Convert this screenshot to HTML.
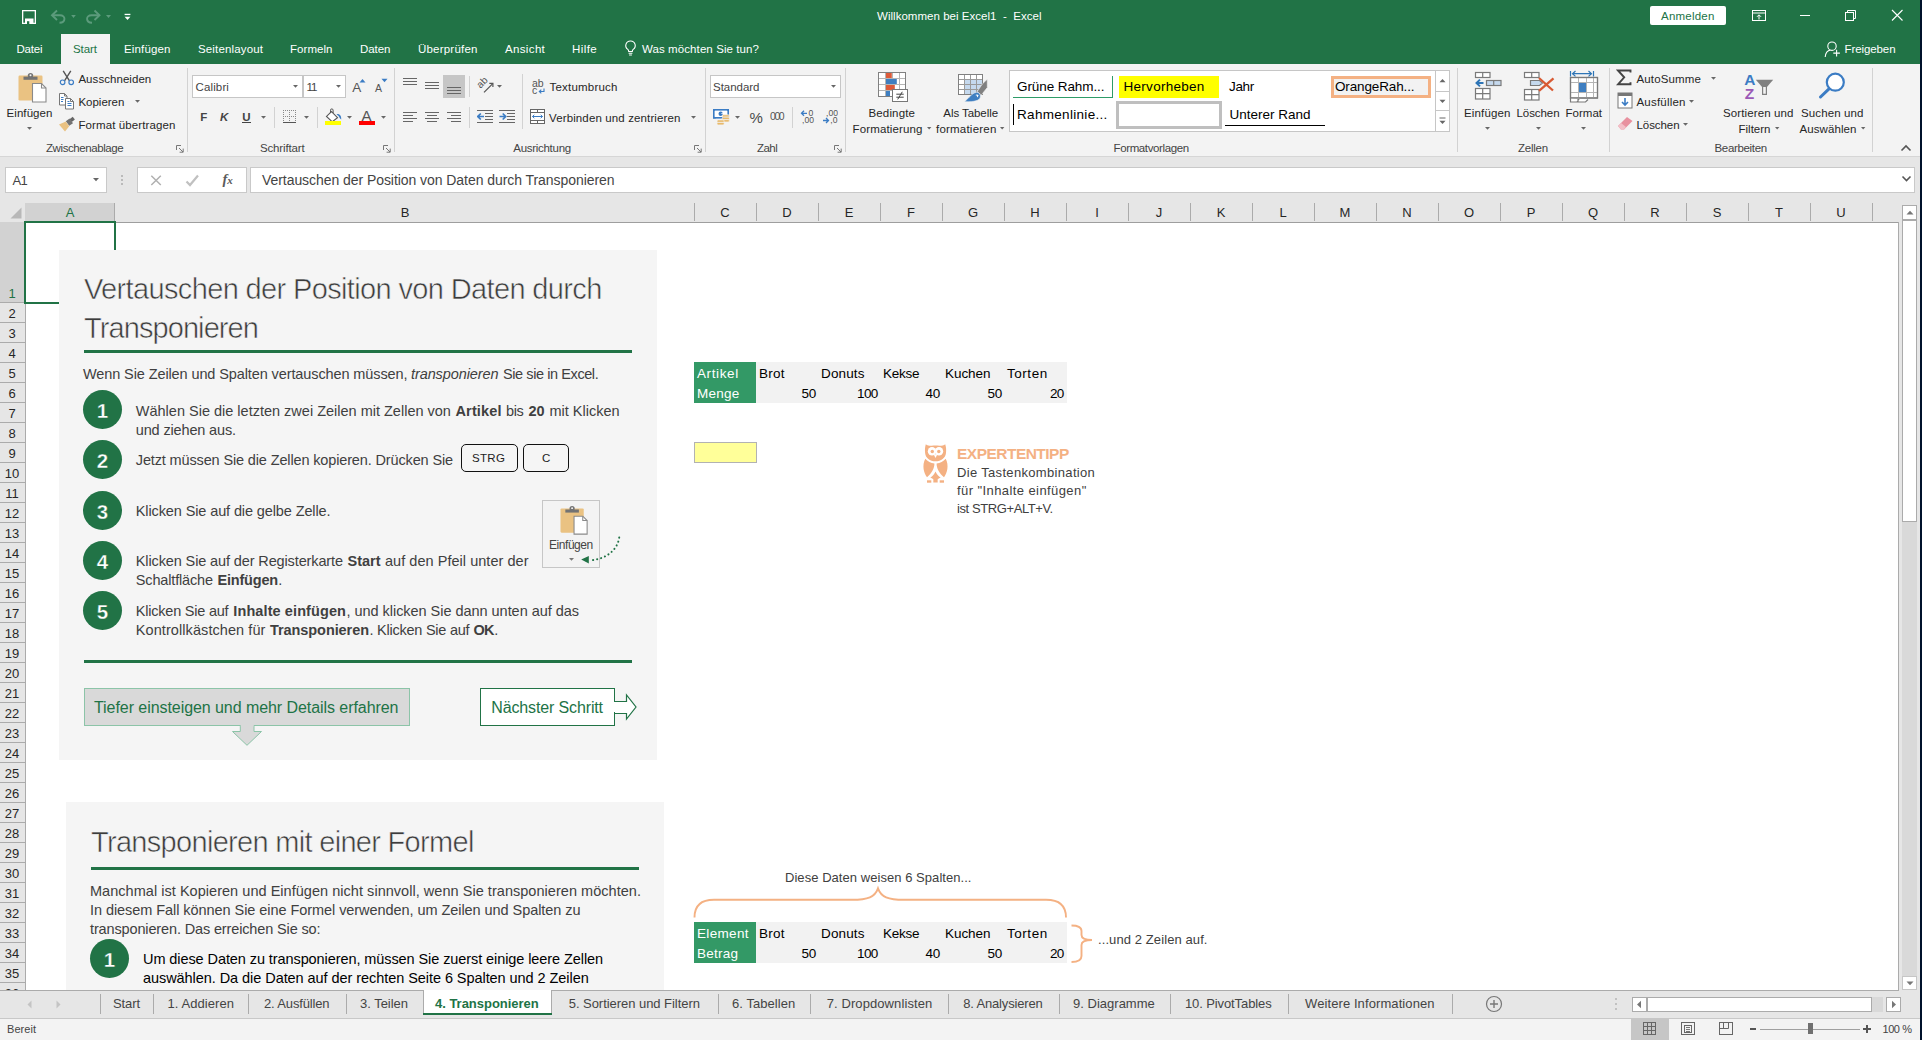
<!DOCTYPE html><html lang="de"><head><meta charset="utf-8"><title>Willkommen bei Excel1 - Excel</title><style>

html,body{margin:0;padding:0}
body{width:1922px;height:1040px;overflow:hidden;background:#fff;position:relative;
font-family:"Liberation Sans",sans-serif;}
body>div,body>svg,body>span{position:absolute;box-sizing:border-box}
.t{white-space:nowrap;line-height:1;display:block}
b{font-weight:bold}

</style></head><body>
<div style="left:0px;top:0px;width:1920px;height:64px;background:#217346;"></div>
<div style="left:1920px;top:0px;width:2px;height:1040px;background:#00112b;"></div>
<div style="left:0px;top:64px;width:1920px;height:93px;background:#f3f3f3;"></div>
<div style="left:0px;top:156px;width:1920px;height:1px;background:#d6d6d6;"></div>
<div style="left:0px;top:157px;width:1920px;height:46px;background:#e6e6e6;"></div>
<div style="left:0px;top:203px;width:1920px;height:19px;background:#e6e6e6;"></div>
<div style="left:0px;top:222px;width:25px;height:768px;background:#e6e6e6;"></div>
<div style="left:1899px;top:203px;width:21px;height:787px;background:#e6e6e6;"></div>
<svg style="left:20px;top:8px;" width="18" height="18" viewBox="0 0 18 18"><rect x="2.650" y="2.650" width="12.700" height="12.700" fill="none" stroke="#fff" stroke-width="1.300"/><rect x="5" y="10.500" width="8.500" height="5.500" fill="#fff"/><rect x="7" y="13.200" width="2.300" height="3" fill="#217346"/></svg>
<svg style="left:48px;top:6px;" width="70" height="20" viewBox="0 0 70 20"><g fill="none" stroke="#5c9b7c" stroke-width="1.900"><path d="M9 4.500L4 9.200 9 14"/><path d="M4.500 9.200H12C18 9.200 18 16.500 11.500 16.800"/><path d="M46.500 4.500L51.500 9.200 46.500 14"/><path d="M51 9.200H43.500C37.500 9.200 37.500 16.500 44 16.800"/></g><path d="M23.200 9h4.600l-2.300 3z" fill="#5c9b7c"/><path d="M58 9h5l-2.500 3z" fill="#5c9b7c"/></svg>
<svg style="left:123px;top:12px;" width="9" height="10" viewBox="0 0 9 10"><rect x="1.600" y="1.800" width="5.800" height="1.300" fill="#fff"/><path d="M1.600 4.700h5.800L4.500 8z" fill="#fff"/></svg>
<span id="t0" class="t" style="left:877px;top:10.89px;font-size:11.5px;color:#fff;letter-spacing:0.029px;white-space:pre;">Willkommen bei Excel1  -  Excel</span>
<div style="left:1650px;top:6px;width:76px;height:19px;background:#fff;border-radius:2px;"></div>
<span id="t1" class="t" style="left:1661px;top:10.89px;font-size:11.5px;color:#217346;letter-spacing:0.227px;">Anmelden</span>
<svg style="left:1751.5px;top:10px;" width="15" height="12" viewBox="0 0 15 12"><rect x="0.5" y="0.5" width="13" height="10" fill="none" stroke="#fff"/><path d="M0.5 3h13" stroke="#fff"/><path d="M7 9.5V5M5 6.8l2-2 2 2" fill="none" stroke="#fff"/></svg>
<div style="left:1800px;top:15px;width:10px;height:1px;background:#fff;"></div>
<svg style="left:1845px;top:10px;" width="12" height="12" viewBox="0 0 12 12"><rect x="0.5" y="2.5" width="8" height="8" fill="none" stroke="#fff"/><path d="M2.5 2.5v-2h8v8h-2" fill="none" stroke="#fff"/></svg>
<svg style="left:1891px;top:9px;" width="13" height="13" viewBox="0 0 13 13"><path d="M1 1l10.5 10.5M11.5 1L1 11.5" stroke="#fff" stroke-width="1.1"/></svg>
<div style="left:61px;top:34px;width:49px;height:30px;background:#f3f3f3;"></div>
<span id="t2" class="t" style="left:16.5px;top:43.89px;font-size:11.5px;color:#fff;letter-spacing:-0.191px;">Datei</span>
<span id="t3" class="t" style="left:73px;top:43.89px;font-size:11.5px;color:#217346;letter-spacing:-0.066px;">Start</span>
<span id="t4" class="t" style="left:124px;top:43.89px;font-size:11.5px;color:#fff;letter-spacing:0.146px;">Einfügen</span>
<span id="t5" class="t" style="left:198px;top:43.89px;font-size:11.5px;color:#fff;letter-spacing:0.148px;">Seitenlayout</span>
<span id="t6" class="t" style="left:290px;top:43.89px;font-size:11.5px;color:#fff;letter-spacing:0.048px;">Formeln</span>
<span id="t7" class="t" style="left:360px;top:43.89px;font-size:11.5px;color:#fff;letter-spacing:-0.042px;">Daten</span>
<span id="t8" class="t" style="left:418px;top:43.89px;font-size:11.5px;color:#fff;letter-spacing:0.206px;">Überprüfen</span>
<span id="t9" class="t" style="left:505px;top:43.89px;font-size:11.5px;color:#fff;letter-spacing:0.351px;">Ansicht</span>
<span id="t10" class="t" style="left:572px;top:43.89px;font-size:11.5px;color:#fff;letter-spacing:0.441px;">Hilfe</span>
<svg style="left:624px;top:40px;" width="13" height="17" viewBox="0 0 13 17"><path d="M6.5 1a4.6 4.6 0 0 0-2.7 8.4c.6.5.9 1.3.9 2.1h3.6c0-.8.3-1.6.9-2.1A4.6 4.6 0 0 0 6.5 1z" fill="none" stroke="#fff" stroke-width="1.1"/><path d="M4.6 13.2h3.8M5.1 15h2.8" stroke="#fff" stroke-width="1.1"/></svg>
<span id="t11" class="t" style="left:642px;top:43.89px;font-size:11.5px;color:#fff;letter-spacing:0.088px;">Was möchten Sie tun?</span>
<svg style="left:1824px;top:40px;" width="19" height="18" viewBox="0 0 19 18"><circle cx="8" cy="6.200" r="4.200" fill="none" stroke="#fff" stroke-width="1.100"/><path d="M1.200 17c.300-4.200 2.600-6.600 5.400-7" fill="none" stroke="#fff" stroke-width="1.100"/><path d="M12.600 9.800v6.600M9.300 13.100h6.600" stroke="#fff" stroke-width="1.100"/></svg>
<span id="t12" class="t" style="left:1844.5px;top:43.89px;font-size:11.5px;color:#fff;letter-spacing:-0.094px;">Freigeben</span>
<div style="left:187px;top:68px;width:1px;height:84px;background:#d2d2d2;"></div>
<div style="left:394px;top:68px;width:1px;height:84px;background:#d2d2d2;"></div>
<div style="left:705px;top:68px;width:1px;height:84px;background:#d2d2d2;"></div>
<div style="left:845px;top:68px;width:1px;height:84px;background:#d2d2d2;"></div>
<div style="left:1457px;top:68px;width:1px;height:84px;background:#d2d2d2;"></div>
<div style="left:1609px;top:68px;width:1px;height:84px;background:#d2d2d2;"></div>
<div style="left:1872px;top:68px;width:1px;height:84px;background:#d2d2d2;"></div>
<span id="t13" class="t" style="left:46px;top:142.89px;font-size:11.5px;color:#444;letter-spacing:-0.416px;">Zwischenablage</span>
<span id="t14" class="t" style="left:260px;top:142.89px;font-size:11.5px;color:#444;letter-spacing:-0.160px;">Schriftart</span>
<span id="t15" class="t" style="left:513.3px;top:142.89px;font-size:11.5px;color:#444;letter-spacing:-0.289px;">Ausrichtung</span>
<span id="t16" class="t" style="left:757px;top:142.89px;font-size:11.5px;color:#444;letter-spacing:-0.536px;">Zahl</span>
<span id="t17" class="t" style="left:1113.5px;top:142.89px;font-size:11.5px;color:#444;letter-spacing:-0.374px;">Formatvorlagen</span>
<span id="t18" class="t" style="left:1518px;top:142.89px;font-size:11.5px;color:#444;letter-spacing:-0.241px;">Zellen</span>
<span id="t19" class="t" style="left:1714.5px;top:142.89px;font-size:11.5px;color:#444;letter-spacing:-0.329px;">Bearbeiten</span>
<svg style="left:176px;top:145px;" width="8" height="8" viewBox="0 0 8 8"><path d="M0.5 5V0.5H5" fill="none" stroke="#777"/><path d="M3 3l4 4M7.2 3.6v3.6H3.6" fill="none" stroke="#777"/></svg>
<svg style="left:383px;top:145px;" width="8" height="8" viewBox="0 0 8 8"><path d="M0.5 5V0.5H5" fill="none" stroke="#777"/><path d="M3 3l4 4M7.2 3.6v3.6H3.6" fill="none" stroke="#777"/></svg>
<svg style="left:694px;top:145px;" width="8" height="8" viewBox="0 0 8 8"><path d="M0.5 5V0.5H5" fill="none" stroke="#777"/><path d="M3 3l4 4M7.2 3.6v3.6H3.6" fill="none" stroke="#777"/></svg>
<svg style="left:834px;top:145px;" width="8" height="8" viewBox="0 0 8 8"><path d="M0.5 5V0.5H5" fill="none" stroke="#777"/><path d="M3 3l4 4M7.2 3.6v3.6H3.6" fill="none" stroke="#777"/></svg>
<svg style="left:1900px;top:144px;" width="12" height="8" viewBox="0 0 12 8"><path d="M1.5 6.5L6 2l4.5 4.5" fill="none" stroke="#555" stroke-width="1.6"/></svg>
<svg style="left:17.5px;top:71.5px;" width="29.0" height="31.0" viewBox="0 0 29 31"><rect x="0.500" y="3.500" width="24" height="25" rx="1.200" fill="#eac282"/><path d="M5.500 4.600h14v3.200h-14z" fill="#737373"/><circle cx="12.500" cy="3.600" r="2.700" fill="#737373"/><circle cx="12.500" cy="3.200" r="1" fill="#f3f3f3"/><path d="M14.500 11.500h9l4.500 4.500v14h-13.500z" fill="#fff" stroke="#8a8a8a" stroke-width="1.100"/><path d="M23.500 11.500v4.500H28" fill="none" stroke="#8a8a8a" stroke-width="1.100"/></svg>
<span id="t20" class="t" style="left:6.5px;top:107.89px;font-size:11.5px;color:#262626;letter-spacing:0.079px;">Einfügen</span>
<svg style="left:26.0px;top:126.1px;" width="7" height="5" viewBox="0 0 7 5"><path d="M1 1h5l-2.5 2.8z" fill="#666"/></svg>
<svg style="left:59px;top:70px;" width="16" height="16" viewBox="0 0 16 16"><path d="M4.2 0.8l6.3 10M11.8 0.8l-6.3 10" stroke="#555" stroke-width="1.4" fill="none"/><circle cx="3.6" cy="12.3" r="2.3" fill="none" stroke="#3b7cc4" stroke-width="1.2"/><circle cx="12.2" cy="12.3" r="2.3" fill="none" stroke="#3b7cc4" stroke-width="1.2"/></svg>
<span id="t21" class="t" style="left:78.4px;top:73.89px;font-size:11.5px;color:#262626;letter-spacing:0.057px;">Ausschneiden</span>
<svg style="left:58px;top:92px;" width="17" height="18" viewBox="0 0 17 18"><path d="M1.500 1.500h5l2.500 2.500v9h-7.500z" fill="#fff" stroke="#777"/><path d="M6.500 1.500v2.500h2.500" fill="none" stroke="#777"/><path d="M3 5.500h2.500M3 7.500h2.500M3 9.500h2" stroke="#3b7cc4"/><path d="M7.500 6.500h5l3 3v7.500h-8z" fill="#fff" stroke="#777"/><path d="M12.500 6.500v3h3" fill="none" stroke="#777"/><path d="M9.500 11.500h4M9.500 13.500h4M9.500 9.500h2" stroke="#3b7cc4"/></svg>
<span id="t22" class="t" style="left:78.4px;top:96.89px;font-size:11.5px;color:#262626;letter-spacing:-0.006px;">Kopieren</span>
<svg style="left:134.0px;top:99.1px;" width="7" height="5" viewBox="0 0 7 5"><path d="M1 1h5l-2.5 2.8z" fill="#666"/></svg>
<svg style="left:58px;top:116px;" width="18" height="16" viewBox="0 0 18 16"><path d="M11.5 3.2l3.2-2.4 2.2 2.800-3.200 2.400z" fill="#666"/><path d="M7.800 5.200l3.800-2.600 3.400 4.600-3.800 2.600z" fill="#737373"/><path d="M1 8.500l6.800-3 3.400 4.700-4.200 5.300z" fill="#eac282"/></svg>
<span id="t23" class="t" style="left:78.4px;top:119.89px;font-size:11.5px;color:#262626;letter-spacing:0.112px;">Format übertragen</span>
<div style="left:192px;top:75px;width:111px;height:23px;background:#fff;border:1px solid #c6c6c6;"></div>
<div style="left:303px;top:75px;width:43px;height:23px;background:#fff;border:1px solid #c6c6c6;"></div>
<span id="t24" class="t" style="left:195.5px;top:81.89px;font-size:11.5px;color:#444;letter-spacing:0.139px;">Calibri</span>
<span id="t25" class="t" style="left:306.5px;top:81.89px;font-size:11.5px;color:#444;letter-spacing:-0.969px;">11</span>
<svg style="left:291.8px;top:84.3px;" width="7" height="5" viewBox="0 0 7 5"><path d="M1 1h5l-2.5 2.8z" fill="#666"/></svg>
<svg style="left:334.8px;top:84.3px;" width="7" height="5" viewBox="0 0 7 5"><path d="M1 1h5l-2.5 2.8z" fill="#666"/></svg>
<span id="t26" class="t" style="left:352.3px;top:81.01px;font-size:13.5px;color:#555;letter-spacing:0.384px;">A</span>
<svg style="left:359px;top:78px;" width="7" height="5" viewBox="0 0 7 5"><path d="M0.500 4.500h6l-3-3.500z" fill="#3b7cc4"/></svg>
<span id="t27" class="t" style="left:375px;top:83.05px;font-size:10.5px;color:#555;letter-spacing:-0.016px;">A</span>
<svg style="left:381px;top:78px;" width="7" height="5" viewBox="0 0 7 5"><path d="M0.500 0.800h6l-3 3.500z" fill="#3b7cc4"/></svg>
<span id="t28" class="t" style="left:200.3px;top:111.89px;font-size:11.5px;color:#444;font-weight:bold;letter-spacing:-0.831px;">F</span>
<span id="t29" class="t" style="left:220px;top:111.89px;font-size:11.5px;color:#444;font-weight:bold;font-style:italic;letter-spacing:0.188px;">K</span>
<span id="t30" class="t" style="left:242.3px;top:111.89px;font-size:11.5px;color:#444;font-weight:bold;letter-spacing:0.087px;">U</span>
<div style="left:242px;top:122px;width:9px;height:1px;background:#444;"></div>
<svg style="left:260.0px;top:115.3px;" width="7" height="5" viewBox="0 0 7 5"><path d="M1 1h5l-2.5 2.8z" fill="#666"/></svg>
<div style="left:274px;top:107px;width:1px;height:21px;background:#d2d2d2;"></div>
<svg style="left:282px;top:109px;" width="15" height="15" viewBox="0 0 15 15"><path d="M1 1.500h13M1 7.500h13M1.500 1v12M7.500 1v12M13.500 1v12" stroke="#888" stroke-dasharray="1 1" fill="none"/><path d="M1 13.500h13" stroke="#555"/></svg>
<svg style="left:303.0px;top:115.3px;" width="7" height="5" viewBox="0 0 7 5"><path d="M1 1h5l-2.5 2.8z" fill="#666"/></svg>
<div style="left:317px;top:107px;width:1px;height:21px;background:#d2d2d2;"></div>
<svg style="left:324px;top:108px;" width="19" height="18" viewBox="0 0 19 18"><path d="M7.500 3.600l6 6-5.200 4.200-5.800-5.400z" fill="#fff" stroke="#555" stroke-width="1.100"/><path d="M6.500 5V2.200a1.300 1.300 0 0 1 2.600 0V5" fill="none" stroke="#555"/><path d="M12.600 6.200C15.500 5.600 17.600 8 17.200 11.400C16 10.600 15.200 9.300 14.800 8.200Z" fill="#3b7cc4"/><rect x="1" y="13" width="16" height="4" fill="#ffff00"/></svg>
<svg style="left:345.8px;top:115.3px;" width="7" height="5" viewBox="0 0 7 5"><path d="M1 1h5l-2.5 2.8z" fill="#666"/></svg>
<span id="t31" class="t" style="left:361.6px;top:107.99px;font-size:15px;color:#555;letter-spacing:1.584px;">A</span>
<div style="left:359px;top:121px;width:16px;height:4px;background:#ff0000;"></div>
<svg style="left:380.0px;top:115.3px;" width="7" height="5" viewBox="0 0 7 5"><path d="M1 1h5l-2.5 2.8z" fill="#666"/></svg>
<div style="left:403px;top:78px;width:14px;height:1px;background:#666;"></div>
<div style="left:403px;top:81px;width:14px;height:1px;background:#666;"></div>
<div style="left:403px;top:84px;width:14px;height:1px;background:#666;"></div>
<div style="left:425px;top:82px;width:14px;height:1px;background:#666;"></div>
<div style="left:425px;top:85px;width:14px;height:1px;background:#666;"></div>
<div style="left:425px;top:88px;width:14px;height:1px;background:#666;"></div>
<div style="left:443px;top:75px;width:22px;height:23px;background:#c6c6c6;"></div>
<div style="left:447px;top:87px;width:14px;height:1px;background:#666;"></div>
<div style="left:447px;top:90px;width:14px;height:1px;background:#666;"></div>
<div style="left:447px;top:93px;width:14px;height:1px;background:#666;"></div>
<div style="left:469px;top:76px;width:1px;height:21px;background:#d2d2d2;"></div>
<svg style="left:476px;top:78px;" width="18" height="16" viewBox="0 0 18 16"><path d="M8 14.400L16.500 5.800" stroke="#555" stroke-width="1.200"/><path d="M13.300 5.400h3.600v3.600" fill="none" stroke="#555" stroke-width="1.200"/><text x="0" y="0" font-family="Liberation Sans" font-size="10" fill="#555" transform="translate(4.600 10.800) rotate(-45)">ab</text></svg>
<svg style="left:496.0px;top:84.3px;" width="7" height="5" viewBox="0 0 7 5"><path d="M1 1h5l-2.5 2.8z" fill="#666"/></svg>
<div style="left:522px;top:74px;width:1px;height:55px;background:#d2d2d2;"></div>
<div style="left:403px;top:112px;width:14px;height:1px;background:#666;"></div>
<div style="left:425px;top:112px;width:14px;height:1px;background:#666;"></div>
<div style="left:447px;top:112px;width:14px;height:1px;background:#666;"></div>
<div style="left:403px;top:115px;width:10px;height:1px;background:#666;"></div>
<div style="left:427px;top:115px;width:10px;height:1px;background:#666;"></div>
<div style="left:451px;top:115px;width:10px;height:1px;background:#666;"></div>
<div style="left:403px;top:118px;width:14px;height:1px;background:#666;"></div>
<div style="left:425px;top:118px;width:14px;height:1px;background:#666;"></div>
<div style="left:447px;top:118px;width:14px;height:1px;background:#666;"></div>
<div style="left:403px;top:121px;width:10px;height:1px;background:#666;"></div>
<div style="left:427px;top:121px;width:10px;height:1px;background:#666;"></div>
<div style="left:451px;top:121px;width:10px;height:1px;background:#666;"></div>
<div style="left:469px;top:107px;width:1px;height:21px;background:#d2d2d2;"></div>
<div style="left:477px;top:110px;width:16px;height:1px;background:#666;"></div>
<div style="left:477px;top:122px;width:16px;height:1px;background:#666;"></div>
<div style="left:485px;top:113px;width:8px;height:1px;background:#666;"></div>
<div style="left:485px;top:116px;width:8px;height:1px;background:#666;"></div>
<div style="left:485px;top:119px;width:8px;height:1px;background:#666;"></div>
<svg style="left:477px;top:110px;" width="8" height="13" viewBox="0 0 8 13"><path d="M7 6.500H1M3.800 3.500l-3 3 3 3" fill="none" stroke="#3b7cc4" stroke-width="1.700"/></svg>
<div style="left:499px;top:110px;width:16px;height:1px;background:#666;"></div>
<div style="left:499px;top:122px;width:16px;height:1px;background:#666;"></div>
<div style="left:507px;top:113px;width:8px;height:1px;background:#666;"></div>
<div style="left:507px;top:116px;width:8px;height:1px;background:#666;"></div>
<div style="left:507px;top:119px;width:8px;height:1px;background:#666;"></div>
<svg style="left:499px;top:110px;" width="8" height="13" viewBox="0 0 8 13"><path d="M0.500 6.500h6M3.700 3.500l3 3-3 3" fill="none" stroke="#3b7cc4" stroke-width="1.700"/></svg>
<span id="t32" class="t" style="left:532px;top:78.05px;font-size:10.5px;color:#555;letter-spacing:-0.125px;">ab</span>
<span id="t33" class="t" style="left:532px;top:85.05px;font-size:10.5px;color:#555;">c</span>
<svg style="left:538px;top:88px;" width="7" height="6" viewBox="0 0 7 6"><path d="M6 0.500v3H1.500M3.300 1.700L1.300 3.500l2 1.800" fill="none" stroke="#3b7cc4" stroke-width="1.100"/></svg>
<span id="t34" class="t" style="left:549.5px;top:81.89px;font-size:11.5px;color:#262626;letter-spacing:0.205px;">Textumbruch</span>
<svg style="left:529px;top:108px;" width="17" height="17" viewBox="0 0 17 17"><rect x="1.500" y="1.500" width="14" height="14" fill="#fff" stroke="#666"/><path d="M1.500 4.500h14M1.500 12.500h14M8.500 1.500v3M8.500 12.500v3" stroke="#666" fill="none"/><path d="M3.500 8.500h10M5.300 6.800L3.500 8.500l1.800 1.700M11.700 6.800l1.800 1.700-1.800 1.700" stroke="#3b7cc4" fill="none"/></svg>
<span id="t35" class="t" style="left:549px;top:112.89px;font-size:11.5px;color:#262626;letter-spacing:0.127px;">Verbinden und zentrieren</span>
<svg style="left:689.5px;top:115.3px;" width="7" height="5" viewBox="0 0 7 5"><path d="M1 1h5l-2.5 2.8z" fill="#666"/></svg>
<div style="left:710px;top:75px;width:131px;height:23px;background:#fff;border:1px solid #c6c6c6;"></div>
<span id="t36" class="t" style="left:713px;top:81.89px;font-size:11.5px;color:#444;letter-spacing:-0.025px;">Standard</span>
<svg style="left:830.0px;top:84.3px;" width="7" height="5" viewBox="0 0 7 5"><path d="M1 1h5l-2.5 2.8z" fill="#666"/></svg>
<svg style="left:712px;top:108px;" width="19" height="19" viewBox="0 0 19 19"><rect x="1.800" y="1.800" width="14.400" height="8" fill="#fff" stroke="#3b7cc4" stroke-width="1.600"/><path d="M1 1h3L1 4zM17 1h-3l3 3zM1 10.600h3L1 7.600z" fill="#3b7cc4"/><circle cx="8.700" cy="5.700" r="2.200" fill="#3b7cc4"/><path d="M8.700 5.700h2.400v-1.400z" fill="#fff"/><g fill="#e8b96a" stroke="#f3f3f3" stroke-width="0.700"><rect x="10.200" y="6.800" width="7.200" height="2.400" rx="1.200"/><rect x="10.200" y="9.200" width="7.200" height="2.400" rx="1.200"/><rect x="10.200" y="11.600" width="7.200" height="2.400" rx="1.200"/><rect x="5" y="11.900" width="7.200" height="2.500" rx="1.200"/><rect x="5" y="14.400" width="7.200" height="2.500" rx="1.200"/></g></svg>
<svg style="left:734.2px;top:115.3px;" width="7" height="5" viewBox="0 0 7 5"><path d="M1 1h5l-2.5 2.8z" fill="#666"/></svg>
<span id="t37" class="t" style="left:749.5px;top:109.99px;font-size:15px;color:#4a4a4a;letter-spacing:-0.844px;">%</span>
<span id="t38" class="t" style="left:770px;top:111.05px;font-size:10.5px;color:#555;letter-spacing:-1.413px;">000</span>
<div style="left:792px;top:107px;width:1px;height:21px;background:#d2d2d2;"></div>
<svg style="left:799.5px;top:110px;" width="16" height="15" viewBox="0 0 16 15"><path d="M7 3.300H1.500M4 0.800L1.500 3.300 4 5.800" fill="none" stroke="#3b7cc4" stroke-width="1.300"/><text font-family="Liberation Sans" font-size="8.600" fill="#555"><tspan x="8.500" y="6.200">0</tspan><tspan x="2" y="13.200">,00</tspan></text></svg>
<svg style="left:821.5px;top:110px;" width="16" height="15" viewBox="0 0 16 15"><path d="M1 10.500h5.500M4 8l2.500 2.500L4 13" fill="none" stroke="#3b7cc4" stroke-width="1.300"/><text font-family="Liberation Sans" font-size="8.600" fill="#555"><tspan x="4" y="6.200">,00</tspan><tspan x="8.300" y="13.400">,0</tspan></text></svg>
<svg style="left:878px;top:72px;" width="31" height="31" viewBox="0 0 31 31"><rect x="0.500" y="0.500" width="27" height="24" fill="#fff" stroke="#808080"/><path d="M7.500 0.500v24M14.500 0.500v24M21.500 0.500v24M0.500 6.500h27M0.500 12.500h27M0.500 18.500h27" stroke="#b5b5b5" fill="none"/><rect x="8" y="1" width="5.800" height="5" fill="#dd5b3a"/><rect x="8" y="7" width="10.800" height="5" fill="#3f7fc1"/><rect x="8" y="13" width="8.800" height="5" fill="#dd5b3a"/><rect x="8" y="19" width="4" height="5" fill="#3f7fc1"/><rect x="0.500" y="0.500" width="27" height="24" fill="none" stroke="#808080"/><rect x="14.500" y="17.500" width="15" height="12" fill="#fff" stroke="#777"/><path d="M18.300 22.200h7.400M18.300 25.200h7.400M24.300 19.800l-4.600 7.600" stroke="#444" stroke-width="1" fill="none"/></svg>
<span id="t39" class="t" style="left:868.5px;top:107.89px;font-size:11.5px;color:#262626;letter-spacing:0.146px;">Bedingte</span>
<span id="t40" class="t" style="left:852.5px;top:123.89px;font-size:11.5px;color:#262626;letter-spacing:0.140px;">Formatierung</span>
<svg style="left:925.5px;top:126.4px;" width="6.4" height="5" viewBox="0 0 6.4 5"><path d="M1 1h4.4l-2.2 2.5z" fill="#666"/></svg>
<svg style="left:957px;top:73px;" width="32" height="30" viewBox="0 0 32 30"><rect x="1.500" y="1.500" width="24" height="20" fill="#fff" stroke="#808080"/><rect x="8" y="7" width="17.500" height="14" fill="#c5d9ee"/><path d="M7.500 1.500v20M13.500 1.500v20M19.500 1.500v20M1.500 6.500h24M1.500 11.500h24M1.500 16.500h24" stroke="#9a9a9a" fill="none"/><rect x="1.500" y="1.500" width="24" height="20" fill="none" stroke="#808080"/><path d="M30.300 6.200V14.500L24.300 22 20.200 18.600 25.300 11Z" fill="#808080" stroke="#f3f3f3" stroke-width="0.600"/><path d="M19.500 19.300C22 19.300 24 21.400 23.400 24C22.500 27.600 18 29 7.500 28.700C12 25 15 20 19.500 19.300Z" fill="#3f7fc1" stroke="#f3f3f3" stroke-width="0.600"/><path d="M18.500 22c1-.900 2.600-.600 3.200.600-.600.300-.800 1-.600 1.800-1-.200-1.400-1-1.200-1.800-.600-.100-1.100-.200-1.400-.600z" fill="#fff"/></svg>
<span id="t41" class="t" style="left:943.3px;top:107.89px;font-size:11.5px;color:#262626;letter-spacing:-0.067px;">Als Tabelle</span>
<span id="t42" class="t" style="left:936px;top:123.89px;font-size:11.5px;color:#262626;letter-spacing:0.212px;">formatieren</span>
<svg style="left:998.8px;top:126.4px;" width="6.4" height="5" viewBox="0 0 6.4 5"><path d="M1 1h4.4l-2.2 2.5z" fill="#666"/></svg>
<div style="left:1009px;top:70px;width:427px;height:62px;background:#fff;border:1px solid #c6c6c6;"></div>
<div style="left:1435px;top:70px;width:15px;height:62px;background:#fff;border:1px solid #c6c6c6;"></div>
<div style="left:1436px;top:91px;width:13px;height:1px;background:#c6c6c6;"></div>
<div style="left:1436px;top:110px;width:13px;height:1px;background:#c6c6c6;"></div>
<svg style="left:1439px;top:78px;" width="7" height="5" viewBox="0 0 7 5"><path d="M0.500 4.300h6l-3-3.300z" fill="#666"/></svg>
<svg style="left:1439px;top:99px;" width="7" height="5" viewBox="0 0 7 5"><path d="M0.500 0.700h6l-3 3.300z" fill="#666"/></svg>
<svg style="left:1439px;top:116.5px;" width="7" height="9" viewBox="0 0 7 9"><path d="M0.500 1h6" stroke="#666"/><path d="M0.500 3.700h6l-3 3.300z" fill="#666"/></svg>
<div style="left:1013px;top:76px;width:100px;height:22px;border-right:1px solid #2e9c68;border-bottom:1px solid #2e9c68;"></div>
<span id="t43" class="t" style="left:1017px;top:80.01px;font-size:13.5px;color:#000;letter-spacing:-0.084px;">Grüne Rahm...</span>
<div style="left:1119px;top:76px;width:100px;height:22px;background:#ffff00;"></div>
<span id="t44" class="t" style="left:1123.5px;top:80.01px;font-size:13.5px;color:#000;letter-spacing:0.281px;">Hervorheben</span>
<span id="t45" class="t" style="left:1229px;top:80.01px;font-size:13.5px;color:#000;letter-spacing:-0.362px;">Jahr</span>
<div style="left:1331px;top:76px;width:100px;height:22px;background:#f2f2f2;border:3px solid #f4b183;"></div>
<span id="t46" class="t" style="left:1335px;top:80.01px;font-size:13.5px;color:#000;letter-spacing:-0.135px;">OrangeRah...</span>
<div style="left:1013px;top:104px;width:1px;height:21px;background:#000;"></div>
<span id="t47" class="t" style="left:1017px;top:108.01px;font-size:13.5px;color:#000;letter-spacing:0.311px;">Rahmenlinie...</span>
<div style="left:1116px;top:101px;width:106px;height:28px;background:#fff;border:3px solid #bfbfbf;"></div>
<span id="t48" class="t" style="left:1229.5px;top:108.01px;font-size:13.5px;color:#000;letter-spacing:-0.004px;">Unterer Rand</span>
<div style="left:1225px;top:125px;width:100px;height:1px;background:#000;"></div>
<svg style="left:1470px;top:68px;" width="140" height="36" viewBox="0 0 140 36"><g fill="#fff" stroke="#7a7a7a" stroke-width="1.200"><rect x="5.500" y="4.500" width="14.500" height="5"/><path d="M12.700 4.500v5"/><rect x="5.500" y="20.500" width="14.500" height="10.500"/><path d="M12.700 20.500v10.500M5.500 25.700h14.500"/><rect x="16.500" y="12.500" width="14.500" height="5" fill="#c5d9ee"/><path d="M23.700 12.500v5"/><rect x="54.500" y="4.500" width="14.500" height="5"/><path d="M61.700 4.500v5"/><rect x="54.500" y="21.500" width="14.500" height="10.500"/><path d="M61.700 21.500v10.500M54.500 26.700h14.500"/><path d="M60.500 12.500h9l3 2.500-3 2.500h-9z" fill="#c5d9ee"/><rect x="100.500" y="9.500" width="27" height="20.500"/><path d="M100.500 30v4h6.500l1.600-2.500h-.600v2.500h7.500l2.500-2.500" fill="#fff"/></g><path d="M108.500 9.500v20.500M116.500 9.500v20.500M123.500 9.500v20.500M100.500 14.500h27M100.500 24.500h27" stroke="#b4b4b4" fill="none"/><rect x="100.500" y="9.500" width="27" height="20.500" fill="none" stroke="#7a7a7a" stroke-width="1.200"/><rect x="109" y="15" width="7" height="9" fill="#3f7fc1"/><path d="M13.500 15H7M10 11.600L6.500 15l3.500 3.400" fill="none" stroke="#2e75b6" stroke-width="2"/><path d="M69 10l14 12.500M83.500 10.300L69 22.800" fill="none" stroke="#d85a33" stroke-width="2.300"/><path d="M100.500 3v5.500M123.500 3v5.500M102.500 5.700h19M105.500 3l-3 2.700 3 2.700M118.500 3l3 2.700-3 2.700" fill="none" stroke="#2e75b6" stroke-width="1.200"/></svg>
<span id="t49" class="t" style="left:1464px;top:107.89px;font-size:11.5px;color:#262626;letter-spacing:0.146px;">Einfügen</span>
<span id="t50" class="t" style="left:1516.5px;top:107.89px;font-size:11.5px;color:#262626;letter-spacing:-0.075px;">Löschen</span>
<span id="t51" class="t" style="left:1565.5px;top:107.89px;font-size:11.5px;color:#262626;letter-spacing:0.014px;">Format</span>
<svg style="left:1484.0px;top:126.3px;" width="7" height="5" viewBox="0 0 7 5"><path d="M1 1h5l-2.5 2.8z" fill="#666"/></svg>
<svg style="left:1534.8px;top:126.3px;" width="7" height="5" viewBox="0 0 7 5"><path d="M1 1h5l-2.5 2.8z" fill="#666"/></svg>
<svg style="left:1579.8px;top:126.3px;" width="7" height="5" viewBox="0 0 7 5"><path d="M1 1h5l-2.5 2.8z" fill="#666"/></svg>
<svg style="left:1616px;top:69px;" width="17" height="17" viewBox="0 0 17 17"><path d="M14.500 3.500V1.500H2l6.200 6.800L2 15.300h12.500v-2" fill="none" stroke="#444" stroke-width="1.900"/></svg>
<span id="t52" class="t" style="left:1636.5px;top:73.89px;font-size:11.5px;color:#262626;letter-spacing:0.143px;">AutoSumme</span>
<svg style="left:1709.8px;top:76.1px;" width="7" height="5" viewBox="0 0 7 5"><path d="M1 1h5l-2.5 2.8z" fill="#666"/></svg>
<svg style="left:1617px;top:92px;" width="16" height="17" viewBox="0 0 16 17"><rect x="1" y="1" width="14" height="15" fill="#fff" stroke="#777"/><rect x="1" y="1" width="14" height="3" fill="#777"/><path d="M8 6v7M5 10l3 3 3-3" fill="none" stroke="#3b7cc4" stroke-width="1.600"/></svg>
<span id="t53" class="t" style="left:1636.5px;top:96.89px;font-size:11.5px;color:#262626;letter-spacing:0.199px;">Ausfüllen</span>
<svg style="left:1688.2px;top:99.3px;" width="7" height="5" viewBox="0 0 7 5"><path d="M1 1h5l-2.5 2.8z" fill="#666"/></svg>
<svg style="left:1617px;top:116px;" width="17" height="14" viewBox="0 0 17 14"><path d="M1 10l9-9 5.500 4-8.500 8.500H4z" fill="#e8919f"/><path d="M1 10l3-3 5 4-2 2.500H4z" fill="#f3c0c8"/></svg>
<span id="t54" class="t" style="left:1636.5px;top:119.89px;font-size:11.5px;color:#262626;letter-spacing:-0.075px;">Löschen</span>
<svg style="left:1682.2px;top:122.3px;" width="7" height="5" viewBox="0 0 7 5"><path d="M1 1h5l-2.5 2.8z" fill="#666"/></svg>
<span id="t55" class="t" style="left:1744.3px;top:71.94px;font-size:15.5px;color:#3b7cc4;font-weight:bold;">A</span>
<span id="t56" class="t" style="left:1744.8px;top:85.94px;font-size:15.5px;color:#9b59b6;font-weight:bold;">Z</span>
<svg style="left:1755px;top:79px;" width="20" height="18" viewBox="0 0 20 18"><path d="M0.800 0.800h17.400l-6.700 7.700h-4z" fill="#808080"/><path d="M7.600 8v7.300h3.800V8" fill="#f3f3f3" stroke="#808080" stroke-width="1.200"/></svg>
<span id="t57" class="t" style="left:1723px;top:107.89px;font-size:11.5px;color:#262626;letter-spacing:0.116px;">Sortieren und</span>
<span id="t58" class="t" style="left:1738.5px;top:123.89px;font-size:11.5px;color:#262626;letter-spacing:0.007px;">Filtern</span>
<svg style="left:1773.5px;top:126.4px;" width="6.4" height="5" viewBox="0 0 6.4 5"><path d="M1 1h4.4l-2.2 2.5z" fill="#666"/></svg>
<svg style="left:1816px;top:70px;" width="30" height="30" viewBox="0 0 30 30"><circle cx="19.300" cy="12.200" r="8.500" fill="#fff" stroke="#3b7cc4" stroke-width="2.200"/><path d="M13 18.800L4.500 27" stroke="#3b7cc4" stroke-width="3" stroke-linecap="round"/></svg>
<span id="t59" class="t" style="left:1801px;top:107.89px;font-size:11.5px;color:#262626;letter-spacing:0.117px;">Suchen und</span>
<span id="t60" class="t" style="left:1799.5px;top:123.89px;font-size:11.5px;color:#262626;letter-spacing:0.086px;">Auswählen</span>
<svg style="left:1859.5px;top:126.4px;" width="6.4" height="5" viewBox="0 0 6.4 5"><path d="M1 1h4.4l-2.2 2.5z" fill="#666"/></svg>
<div style="left:5px;top:167px;width:102px;height:26px;background:#fff;border:1px solid #c9c9c9;"></div>
<span id="t61" class="t" style="left:12.5px;top:174.06px;font-size:13px;color:#444;letter-spacing:-0.604px;">A1</span>
<svg style="left:92.0px;top:176.8px;" width="8" height="6" viewBox="0 0 8 6"><path d="M1 1h6l-3.0 3.3z" fill="#666"/></svg>
<div style="left:121px;top:175px;width:2px;height:2px;background:#ababab;border-radius:1px;"></div>
<div style="left:121px;top:179px;width:2px;height:2px;background:#ababab;border-radius:1px;"></div>
<div style="left:121px;top:183px;width:2px;height:2px;background:#ababab;border-radius:1px;"></div>
<div style="left:137px;top:167px;width:110px;height:26px;background:#fff;border:1px solid #c9c9c9;"></div>
<svg style="left:150px;top:174px;" width="13" height="13" viewBox="0 0 13 13"><path d="M1.300 1.700l9.500 9.300M10.800 1.700L1.300 11" stroke="#b0b0b0" stroke-width="1.500"/></svg>
<svg style="left:185px;top:173.5px;" width="15" height="13" viewBox="0 0 15 13"><path d="M1.500 7.500l3.500 3.500 8-9.500" stroke="#c0c0c0" stroke-width="2.200" fill="none"/></svg>
<span id="t62" class="t" style="left:222.5px;top:171.96px;font-size:14px;color:#5a5a5a;"><i style="font-family:'Liberation Serif',serif;font-size:14.500px;font-weight:bold">f</i><i style="font-family:'Liberation Serif',serif;font-size:11px;font-weight:bold">x</i></span>
<div style="left:250px;top:167px;width:1665px;height:26px;background:#fff;border:1px solid #c9c9c9;"></div>
<span id="t63" class="t" style="left:262px;top:172.96px;font-size:14px;color:#444;letter-spacing:-0.059px;">Vertauschen der Position von Daten durch Transponieren</span>
<svg style="left:1901px;top:175px;" width="11" height="8" viewBox="0 0 11 8"><path d="M1.500 1.500l4 4 4-4" fill="none" stroke="#555" stroke-width="1.600"/></svg>
<svg style="left:9px;top:206px;" width="14" height="14" viewBox="0 0 14 14"><path d="M12.500 1.500v11h-11z" fill="#b8b8b8"/></svg>
<div style="left:25px;top:203px;width:90px;height:18px;background:#d2d2d2;"></div>
<div style="left:114px;top:203px;width:1px;height:18px;background:#ababab;"></div>
<div style="left:694px;top:203px;width:1px;height:18px;background:#ababab;"></div>
<div style="left:756px;top:203px;width:1px;height:18px;background:#ababab;"></div>
<div style="left:818px;top:203px;width:1px;height:18px;background:#ababab;"></div>
<div style="left:880px;top:203px;width:1px;height:18px;background:#ababab;"></div>
<div style="left:942px;top:203px;width:1px;height:18px;background:#ababab;"></div>
<div style="left:1004px;top:203px;width:1px;height:18px;background:#ababab;"></div>
<div style="left:1066px;top:203px;width:1px;height:18px;background:#ababab;"></div>
<div style="left:1128px;top:203px;width:1px;height:18px;background:#ababab;"></div>
<div style="left:1190px;top:203px;width:1px;height:18px;background:#ababab;"></div>
<div style="left:1252px;top:203px;width:1px;height:18px;background:#ababab;"></div>
<div style="left:1314px;top:203px;width:1px;height:18px;background:#ababab;"></div>
<div style="left:1376px;top:203px;width:1px;height:18px;background:#ababab;"></div>
<div style="left:1438px;top:203px;width:1px;height:18px;background:#ababab;"></div>
<div style="left:1500px;top:203px;width:1px;height:18px;background:#ababab;"></div>
<div style="left:1562px;top:203px;width:1px;height:18px;background:#ababab;"></div>
<div style="left:1624px;top:203px;width:1px;height:18px;background:#ababab;"></div>
<div style="left:1686px;top:203px;width:1px;height:18px;background:#ababab;"></div>
<div style="left:1748px;top:203px;width:1px;height:18px;background:#ababab;"></div>
<div style="left:1810px;top:203px;width:1px;height:18px;background:#ababab;"></div>
<div style="left:1872px;top:203px;width:1px;height:18px;background:#ababab;"></div>
<span id="t64" class="t" style="left:55px;top:206.06px;font-size:13px;color:#217346;width:30px;text-align:center;">A</span>
<span id="t65" class="t" style="left:390px;top:206.06px;font-size:13px;color:#262626;width:30px;text-align:center;">B</span>
<span id="t66" class="t" style="left:710px;top:206.06px;font-size:13px;color:#262626;width:30px;text-align:center;">C</span>
<span id="t67" class="t" style="left:772px;top:206.06px;font-size:13px;color:#262626;width:30px;text-align:center;">D</span>
<span id="t68" class="t" style="left:834px;top:206.06px;font-size:13px;color:#262626;width:30px;text-align:center;">E</span>
<span id="t69" class="t" style="left:896px;top:206.06px;font-size:13px;color:#262626;width:30px;text-align:center;">F</span>
<span id="t70" class="t" style="left:958px;top:206.06px;font-size:13px;color:#262626;width:30px;text-align:center;">G</span>
<span id="t71" class="t" style="left:1020px;top:206.06px;font-size:13px;color:#262626;width:30px;text-align:center;">H</span>
<span id="t72" class="t" style="left:1082px;top:206.06px;font-size:13px;color:#262626;width:30px;text-align:center;">I</span>
<span id="t73" class="t" style="left:1144px;top:206.06px;font-size:13px;color:#262626;width:30px;text-align:center;">J</span>
<span id="t74" class="t" style="left:1206px;top:206.06px;font-size:13px;color:#262626;width:30px;text-align:center;">K</span>
<span id="t75" class="t" style="left:1268px;top:206.06px;font-size:13px;color:#262626;width:30px;text-align:center;">L</span>
<span id="t76" class="t" style="left:1330px;top:206.06px;font-size:13px;color:#262626;width:30px;text-align:center;">M</span>
<span id="t77" class="t" style="left:1392px;top:206.06px;font-size:13px;color:#262626;width:30px;text-align:center;">N</span>
<span id="t78" class="t" style="left:1454px;top:206.06px;font-size:13px;color:#262626;width:30px;text-align:center;">O</span>
<span id="t79" class="t" style="left:1516px;top:206.06px;font-size:13px;color:#262626;width:30px;text-align:center;">P</span>
<span id="t80" class="t" style="left:1578px;top:206.06px;font-size:13px;color:#262626;width:30px;text-align:center;">Q</span>
<span id="t81" class="t" style="left:1640px;top:206.06px;font-size:13px;color:#262626;width:30px;text-align:center;">R</span>
<span id="t82" class="t" style="left:1702px;top:206.06px;font-size:13px;color:#262626;width:30px;text-align:center;">S</span>
<span id="t83" class="t" style="left:1764px;top:206.06px;font-size:13px;color:#262626;width:30px;text-align:center;">T</span>
<span id="t84" class="t" style="left:1826px;top:206.06px;font-size:13px;color:#262626;width:30px;text-align:center;">U</span>
<div style="left:0px;top:222px;width:1899px;height:1px;background:#9e9e9e;"></div>
<div style="left:0px;top:222px;width:25px;height:81px;background:#d2d2d2;"></div>
<div style="left:25px;top:222px;width:1px;height:768px;background:#ababab;"></div>
<span id="t85" class="t" style="left:0px;top:287.06px;font-size:13px;color:#217346;width:24px;text-align:center;">1</span>
<div style="left:0px;top:302px;width:25px;height:1px;background:#ababab;"></div>
<span id="t86" class="t" style="left:0px;top:307.06px;font-size:13px;color:#262626;width:24px;text-align:center;">2</span>
<div style="left:0px;top:322px;width:25px;height:1px;background:#ababab;"></div>
<span id="t87" class="t" style="left:0px;top:327.06px;font-size:13px;color:#262626;width:24px;text-align:center;">3</span>
<div style="left:0px;top:342px;width:25px;height:1px;background:#ababab;"></div>
<span id="t88" class="t" style="left:0px;top:347.06px;font-size:13px;color:#262626;width:24px;text-align:center;">4</span>
<div style="left:0px;top:362px;width:25px;height:1px;background:#ababab;"></div>
<span id="t89" class="t" style="left:0px;top:367.06px;font-size:13px;color:#262626;width:24px;text-align:center;">5</span>
<div style="left:0px;top:382px;width:25px;height:1px;background:#ababab;"></div>
<span id="t90" class="t" style="left:0px;top:387.06px;font-size:13px;color:#262626;width:24px;text-align:center;">6</span>
<div style="left:0px;top:402px;width:25px;height:1px;background:#ababab;"></div>
<span id="t91" class="t" style="left:0px;top:407.06px;font-size:13px;color:#262626;width:24px;text-align:center;">7</span>
<div style="left:0px;top:422px;width:25px;height:1px;background:#ababab;"></div>
<span id="t92" class="t" style="left:0px;top:427.06px;font-size:13px;color:#262626;width:24px;text-align:center;">8</span>
<div style="left:0px;top:442px;width:25px;height:1px;background:#ababab;"></div>
<span id="t93" class="t" style="left:0px;top:447.06px;font-size:13px;color:#262626;width:24px;text-align:center;">9</span>
<div style="left:0px;top:462px;width:25px;height:1px;background:#ababab;"></div>
<span id="t94" class="t" style="left:0px;top:467.06px;font-size:13px;color:#262626;width:24px;text-align:center;">10</span>
<div style="left:0px;top:482px;width:25px;height:1px;background:#ababab;"></div>
<span id="t95" class="t" style="left:0px;top:487.06px;font-size:13px;color:#262626;width:24px;text-align:center;">11</span>
<div style="left:0px;top:502px;width:25px;height:1px;background:#ababab;"></div>
<span id="t96" class="t" style="left:0px;top:507.06px;font-size:13px;color:#262626;width:24px;text-align:center;">12</span>
<div style="left:0px;top:522px;width:25px;height:1px;background:#ababab;"></div>
<span id="t97" class="t" style="left:0px;top:527.06px;font-size:13px;color:#262626;width:24px;text-align:center;">13</span>
<div style="left:0px;top:542px;width:25px;height:1px;background:#ababab;"></div>
<span id="t98" class="t" style="left:0px;top:547.06px;font-size:13px;color:#262626;width:24px;text-align:center;">14</span>
<div style="left:0px;top:562px;width:25px;height:1px;background:#ababab;"></div>
<span id="t99" class="t" style="left:0px;top:567.06px;font-size:13px;color:#262626;width:24px;text-align:center;">15</span>
<div style="left:0px;top:582px;width:25px;height:1px;background:#ababab;"></div>
<span id="t100" class="t" style="left:0px;top:587.06px;font-size:13px;color:#262626;width:24px;text-align:center;">16</span>
<div style="left:0px;top:602px;width:25px;height:1px;background:#ababab;"></div>
<span id="t101" class="t" style="left:0px;top:607.06px;font-size:13px;color:#262626;width:24px;text-align:center;">17</span>
<div style="left:0px;top:622px;width:25px;height:1px;background:#ababab;"></div>
<span id="t102" class="t" style="left:0px;top:627.06px;font-size:13px;color:#262626;width:24px;text-align:center;">18</span>
<div style="left:0px;top:642px;width:25px;height:1px;background:#ababab;"></div>
<span id="t103" class="t" style="left:0px;top:647.06px;font-size:13px;color:#262626;width:24px;text-align:center;">19</span>
<div style="left:0px;top:662px;width:25px;height:1px;background:#ababab;"></div>
<span id="t104" class="t" style="left:0px;top:667.06px;font-size:13px;color:#262626;width:24px;text-align:center;">20</span>
<div style="left:0px;top:682px;width:25px;height:1px;background:#ababab;"></div>
<span id="t105" class="t" style="left:0px;top:687.06px;font-size:13px;color:#262626;width:24px;text-align:center;">21</span>
<div style="left:0px;top:702px;width:25px;height:1px;background:#ababab;"></div>
<span id="t106" class="t" style="left:0px;top:707.06px;font-size:13px;color:#262626;width:24px;text-align:center;">22</span>
<div style="left:0px;top:722px;width:25px;height:1px;background:#ababab;"></div>
<span id="t107" class="t" style="left:0px;top:727.06px;font-size:13px;color:#262626;width:24px;text-align:center;">23</span>
<div style="left:0px;top:742px;width:25px;height:1px;background:#ababab;"></div>
<span id="t108" class="t" style="left:0px;top:747.06px;font-size:13px;color:#262626;width:24px;text-align:center;">24</span>
<div style="left:0px;top:762px;width:25px;height:1px;background:#ababab;"></div>
<span id="t109" class="t" style="left:0px;top:767.06px;font-size:13px;color:#262626;width:24px;text-align:center;">25</span>
<div style="left:0px;top:782px;width:25px;height:1px;background:#ababab;"></div>
<span id="t110" class="t" style="left:0px;top:787.06px;font-size:13px;color:#262626;width:24px;text-align:center;">26</span>
<div style="left:0px;top:802px;width:25px;height:1px;background:#ababab;"></div>
<span id="t111" class="t" style="left:0px;top:807.06px;font-size:13px;color:#262626;width:24px;text-align:center;">27</span>
<div style="left:0px;top:822px;width:25px;height:1px;background:#ababab;"></div>
<span id="t112" class="t" style="left:0px;top:827.06px;font-size:13px;color:#262626;width:24px;text-align:center;">28</span>
<div style="left:0px;top:842px;width:25px;height:1px;background:#ababab;"></div>
<span id="t113" class="t" style="left:0px;top:847.06px;font-size:13px;color:#262626;width:24px;text-align:center;">29</span>
<div style="left:0px;top:862px;width:25px;height:1px;background:#ababab;"></div>
<span id="t114" class="t" style="left:0px;top:867.06px;font-size:13px;color:#262626;width:24px;text-align:center;">30</span>
<div style="left:0px;top:882px;width:25px;height:1px;background:#ababab;"></div>
<span id="t115" class="t" style="left:0px;top:887.06px;font-size:13px;color:#262626;width:24px;text-align:center;">31</span>
<div style="left:0px;top:902px;width:25px;height:1px;background:#ababab;"></div>
<span id="t116" class="t" style="left:0px;top:907.06px;font-size:13px;color:#262626;width:24px;text-align:center;">32</span>
<div style="left:0px;top:922px;width:25px;height:1px;background:#ababab;"></div>
<span id="t117" class="t" style="left:0px;top:927.06px;font-size:13px;color:#262626;width:24px;text-align:center;">33</span>
<div style="left:0px;top:942px;width:25px;height:1px;background:#ababab;"></div>
<span id="t118" class="t" style="left:0px;top:947.06px;font-size:13px;color:#262626;width:24px;text-align:center;">34</span>
<div style="left:0px;top:962px;width:25px;height:1px;background:#ababab;"></div>
<span id="t119" class="t" style="left:0px;top:967.06px;font-size:13px;color:#262626;width:24px;text-align:center;">35</span>
<div style="left:0px;top:982px;width:25px;height:1px;background:#ababab;"></div>
<span id="t120" class="t" style="left:0px;top:987.06px;font-size:13px;color:#262626;width:24px;text-align:center;">36</span>
<div style="left:1898px;top:222px;width:1px;height:768px;background:#ababab;"></div>
<div style="left:24px;top:221px;width:92px;height:83px;border:2px solid #217346;"></div>
<div style="left:59px;top:250px;width:598px;height:510px;background:#f5f5f5;"></div>
<span id="t121" class="t" style="left:84px;top:275.01px;font-size:29px;color:#3c3c3c;letter-spacing:-0.640px;-webkit-text-stroke:0.55px #f5f5f5;">Vertauschen der Position von Daten durch</span>
<span id="t122" class="t" style="left:84px;top:314.01px;font-size:29px;color:#3c3c3c;letter-spacing:-0.915px;-webkit-text-stroke:0.55px #f5f5f5;">Transponieren</span>
<div style="left:84px;top:350px;width:548px;height:3px;background:#217346;"></div>
<span id="t123" class="t" style="left:83px;top:367.04px;font-size:14.5px;color:#404040;letter-spacing:-0.106px;">Wenn Sie Zeilen und Spalten vertauschen müssen,</span>
<span id="t124" class="t" style="left:411px;top:367.04px;font-size:14.5px;color:#404040;font-style:italic;letter-spacing:-0.094px;">transponieren</span>
<span id="t125" class="t" style="left:503px;top:367.04px;font-size:14.5px;color:#404040;letter-spacing:-0.416px;">Sie sie in Excel.</span>
<div style="left:83.0px;top:390.0px;width:39px;height:39px;background:#217346;border-radius:50%;"></div>
<span id="t126" class="t" style="left:92.5px;top:400.96px;font-size:20.5px;color:#fff;font-weight:bold;width:20px;text-align:center;-webkit-text-stroke:0.35px #217346;">1</span>
<span id="t127" class="t" style="left:135.8px;top:404.04px;font-size:14.5px;color:#404040;">Wählen Sie die letzten zwei Zeilen mit Zellen von</span>
<span id="t128" class="t" style="left:455.5px;top:404.04px;font-size:14.5px;color:#404040;font-weight:bold;letter-spacing:0.132px;">Artikel</span>
<span id="t129" class="t" style="left:506px;top:404.04px;font-size:14.5px;color:#404040;letter-spacing:-0.419px;">bis</span>
<span id="t130" class="t" style="left:528.5px;top:404.04px;font-size:14.5px;color:#404040;font-weight:bold;letter-spacing:-0.094px;">20</span>
<span id="t131" class="t" style="left:549.5px;top:404.04px;font-size:14.5px;color:#404040;letter-spacing:-0.010px;">mit Klicken</span>
<span id="t132" class="t" style="left:135.8px;top:423.04px;font-size:14.5px;color:#404040;letter-spacing:-0.151px;">und ziehen aus.</span>
<div style="left:83.0px;top:440.0px;width:39px;height:39px;background:#217346;border-radius:50%;"></div>
<span id="t133" class="t" style="left:92.5px;top:450.96px;font-size:20.5px;color:#fff;font-weight:bold;width:20px;text-align:center;-webkit-text-stroke:0.35px #217346;">2</span>
<span id="t134" class="t" style="left:135.8px;top:453.04px;font-size:14.5px;color:#404040;letter-spacing:-0.140px;">Jetzt müssen Sie die Zellen kopieren. Drücken Sie</span>
<div style="left:461px;top:444px;width:57px;height:28px;background:#f5f5f5;border:1px solid #111;border-radius:5px;"></div>
<span id="t135" class="t" style="left:472px;top:452.89px;font-size:11.5px;color:#222;letter-spacing:0.299px;">STRG</span>
<div style="left:523px;top:444px;width:46px;height:28px;background:#f5f5f5;border:1px solid #111;border-radius:5px;"></div>
<span id="t136" class="t" style="left:542px;top:452.89px;font-size:11.5px;color:#222;letter-spacing:-0.812px;">C</span>
<div style="left:83.0px;top:491.0px;width:39px;height:39px;background:#217346;border-radius:50%;"></div>
<span id="t137" class="t" style="left:92.5px;top:501.96px;font-size:20.5px;color:#fff;font-weight:bold;width:20px;text-align:center;-webkit-text-stroke:0.35px #217346;">3</span>
<span id="t138" class="t" style="left:135.8px;top:504.04px;font-size:14.5px;color:#404040;letter-spacing:-0.114px;">Klicken Sie auf die gelbe Zelle.</span>
<div style="left:83.0px;top:541.0px;width:39px;height:39px;background:#217346;border-radius:50%;"></div>
<span id="t139" class="t" style="left:92.5px;top:551.96px;font-size:20.5px;color:#fff;font-weight:bold;width:20px;text-align:center;-webkit-text-stroke:0.35px #217346;">4</span>
<span id="t140" class="t" style="left:135.8px;top:554.04px;font-size:14.5px;color:#404040;letter-spacing:-0.122px;">Klicken Sie auf der Registerkarte</span>
<span id="t141" class="t" style="left:347.5px;top:554.04px;font-size:14.5px;color:#404040;font-weight:bold;letter-spacing:-0.010px;">Start</span>
<span id="t142" class="t" style="left:385px;top:554.04px;font-size:14.5px;color:#404040;letter-spacing:0.036px;">auf den Pfeil unter der</span>
<span id="t143" class="t" style="left:135.8px;top:573.04px;font-size:14.5px;color:#404040;letter-spacing:-0.157px;">Schaltfläche</span>
<span id="t144" class="t" style="left:217.5px;top:573.04px;font-size:14.5px;color:#404040;font-weight:bold;letter-spacing:-0.204px;">Einfügen</span>
<span id="t145" class="t" style="left:278.3px;top:573.04px;font-size:14.5px;color:#404040;">.</span>
<div style="left:83.0px;top:591.0px;width:39px;height:39px;background:#217346;border-radius:50%;"></div>
<span id="t146" class="t" style="left:92.5px;top:601.96px;font-size:20.5px;color:#fff;font-weight:bold;width:20px;text-align:center;-webkit-text-stroke:0.35px #217346;">5</span>
<span id="t147" class="t" style="left:135.8px;top:604.04px;font-size:14.5px;color:#404040;letter-spacing:-0.222px;">Klicken Sie auf</span>
<span id="t148" class="t" style="left:233.3px;top:604.04px;font-size:14.5px;color:#404040;font-weight:bold;letter-spacing:0.099px;">Inhalte einfügen</span>
<span id="t149" class="t" style="left:346.5px;top:604.04px;font-size:14.5px;color:#404040;letter-spacing:-0.036px;">, und klicken Sie dann unten auf das</span>
<span id="t150" class="t" style="left:135.8px;top:623.04px;font-size:14.5px;color:#404040;letter-spacing:0.079px;">Kontrollkästchen für</span>
<span id="t151" class="t" style="left:270px;top:623.04px;font-size:14.5px;color:#404040;font-weight:bold;letter-spacing:-0.074px;">Transponieren</span>
<span id="t152" class="t" style="left:369.5px;top:623.04px;font-size:14.5px;color:#404040;letter-spacing:-0.241px;">. Klicken Sie auf</span>
<span id="t153" class="t" style="left:473.5px;top:623.04px;font-size:14.5px;color:#404040;font-weight:bold;letter-spacing:-0.833px;">OK</span>
<span id="t154" class="t" style="left:494.3px;top:623.04px;font-size:14.5px;color:#404040;">.</span>
<div style="left:84px;top:660px;width:548px;height:3px;background:#217346;"></div>
<div style="left:542px;top:500px;width:58px;height:68px;background:#f3f3f3;border:1px solid #c6c6c6;"></div>
<svg style="left:559.7px;top:505.2px;" width="28.1" height="30.1" viewBox="0 0 29 31"><rect x="0.500" y="3.500" width="24" height="25" rx="1.200" fill="#eac282"/><path d="M5.500 4.600h14v3.200h-14z" fill="#737373"/><circle cx="12.500" cy="3.600" r="2.700" fill="#737373"/><circle cx="12.500" cy="3.200" r="1" fill="#f3f3f3"/><path d="M14.500 11.500h9l4.500 4.500v14h-13.500z" fill="#fff" stroke="#8a8a8a" stroke-width="1.100"/><path d="M23.500 11.500v4.500H28" fill="none" stroke="#8a8a8a" stroke-width="1.100"/></svg>
<span id="t155" class="t" style="left:549px;top:539.03px;font-size:12px;color:#444;letter-spacing:-0.450px;">Einfügen</span>
<svg style="left:567.6px;top:557.3px;" width="7" height="5" viewBox="0 0 7 5"><path d="M1 1h5l-2.5 2.8z" fill="#777"/></svg>
<svg style="left:576px;top:532px;" width="48" height="34" viewBox="0 0 48 34"><path d="M43.200 5.600C41.500 18.500 29 27.800 13.500 28.300" fill="none" stroke="#217346" stroke-width="2" stroke-dasharray="0.100 4" stroke-linecap="round"/><path d="M5.200 27.400l7.600-3.300v7.400z" fill="#217346"/></svg>
<div style="left:84px;top:688px;width:326px;height:38px;background:#d9d9d9;border:1px solid #8cc4a8;"></div>
<svg style="left:228px;top:725px;" width="38" height="22" viewBox="0 0 38 22"><path d="M12.300 0v6.500H4.500L19 20.300 33.500 6.500H26V0" fill="#d9d9d9" stroke="#8cc4a8"/><rect x="12.800" y="0" width="12.700" height="1.500" fill="#d9d9d9"/></svg>
<span id="t156" class="t" style="left:94px;top:700.02px;font-size:16px;color:#217346;letter-spacing:-0.062px;">Tiefer einsteigen und mehr Details erfahren</span>
<svg style="left:613px;top:692px;" width="26" height="30" viewBox="0 0 26 30"><path d="M2 9.500h11.500V3L23 15 13.500 27V21.500H2" fill="#fff" stroke="#217346" stroke-width="1.200"/></svg>
<div style="left:480px;top:688px;width:135px;height:38px;background:#fff;border:1.300px solid #217346;"></div>
<div style="left:614px;top:701.8px;width:3px;height:10.5px;background:#fff;"></div>
<span id="t157" class="t" style="left:491.3px;top:700.02px;font-size:16px;color:#217346;letter-spacing:-0.136px;">Nächster Schritt</span>
<div style="left:66px;top:802px;width:598px;height:188px;background:#f5f5f5;"></div>
<span id="t158" class="t" style="left:91px;top:828.01px;font-size:29px;color:#3c3c3c;letter-spacing:-0.694px;-webkit-text-stroke:0.55px #f5f5f5;">Transponieren mit einer Formel</span>
<div style="left:91px;top:867px;width:548px;height:3px;background:#217346;"></div>
<span id="t159" class="t" style="left:90px;top:884.04px;font-size:14.5px;color:#404040;letter-spacing:0.035px;">Manchmal ist Kopieren und Einfügen nicht sinnvoll, wenn Sie transponieren möchten.</span>
<span id="t160" class="t" style="left:90px;top:903.04px;font-size:14.5px;color:#404040;letter-spacing:-0.061px;">In diesem Fall können Sie eine Formel verwenden, um Zeilen und Spalten zu</span>
<span id="t161" class="t" style="left:90px;top:922.04px;font-size:14.5px;color:#404040;letter-spacing:-0.137px;">transponieren. Das erreichen Sie so:</span>
<div style="left:90.0px;top:939.0px;width:39px;height:39px;background:#217346;border-radius:50%;"></div>
<span id="t162" class="t" style="left:99.5px;top:949.96px;font-size:20.5px;color:#fff;font-weight:bold;width:20px;text-align:center;-webkit-text-stroke:0.35px #217346;">1</span>
<span id="t163" class="t" style="left:143px;top:952.04px;font-size:14.5px;color:#000;letter-spacing:-0.084px;">Um diese Daten zu transponieren, müssen Sie zuerst einige leere Zellen</span>
<span id="t164" class="t" style="left:143px;top:971.04px;font-size:14.5px;color:#000;letter-spacing:-0.061px;">auswählen. Da die Daten auf der rechten Seite 6 Spalten und 2 Zeilen</span>
<div style="left:694px;top:362px;width:373px;height:41px;background:#f2f2f2;"></div>
<div style="left:694px;top:362px;width:62px;height:41px;background:#339966;"></div>
<span id="t165" class="t" style="left:697px;top:367.01px;font-size:13.5px;color:#fff;letter-spacing:0.613px;">Artikel</span>
<span id="t166" class="t" style="left:697px;top:387.01px;font-size:13.5px;color:#fff;letter-spacing:0.271px;">Menge</span>
<span id="t167" class="t" style="left:759px;top:367.01px;font-size:13.5px;color:#000;letter-spacing:0.210px;">Brot</span>
<span id="t168" class="t" style="left:801.5px;top:387.01px;font-size:13.5px;color:#000;letter-spacing:-0.354px;">50</span>
<span id="t169" class="t" style="left:821px;top:367.01px;font-size:13.5px;color:#000;letter-spacing:0.131px;">Donuts</span>
<span id="t170" class="t" style="left:857px;top:387.01px;font-size:13.5px;color:#000;letter-spacing:-0.613px;">100</span>
<span id="t171" class="t" style="left:883px;top:367.01px;font-size:13.5px;color:#000;letter-spacing:-0.229px;">Kekse</span>
<span id="t172" class="t" style="left:925.5px;top:387.01px;font-size:13.5px;color:#000;letter-spacing:-0.354px;">40</span>
<span id="t173" class="t" style="left:945px;top:367.01px;font-size:13.5px;color:#000;letter-spacing:-0.054px;">Kuchen</span>
<span id="t174" class="t" style="left:987.5px;top:387.01px;font-size:13.5px;color:#000;letter-spacing:-0.354px;">50</span>
<span id="t175" class="t" style="left:1007px;top:367.01px;font-size:13.5px;color:#000;letter-spacing:0.540px;">Torten</span>
<span id="t176" class="t" style="left:1050px;top:387.01px;font-size:13.5px;color:#000;letter-spacing:-0.688px;">20</span>
<div style="left:694px;top:922px;width:373px;height:41px;background:#f2f2f2;"></div>
<div style="left:694px;top:922px;width:62px;height:41px;background:#339966;"></div>
<span id="t177" class="t" style="left:697px;top:927.01px;font-size:13.5px;color:#fff;letter-spacing:0.334px;">Element</span>
<span id="t178" class="t" style="left:697px;top:947.01px;font-size:13.5px;color:#fff;letter-spacing:0.222px;">Betrag</span>
<span id="t179" class="t" style="left:759px;top:927.01px;font-size:13.5px;color:#000;letter-spacing:0.210px;">Brot</span>
<span id="t180" class="t" style="left:801.5px;top:947.01px;font-size:13.5px;color:#000;letter-spacing:-0.354px;">50</span>
<span id="t181" class="t" style="left:821px;top:927.01px;font-size:13.5px;color:#000;letter-spacing:0.131px;">Donuts</span>
<span id="t182" class="t" style="left:857px;top:947.01px;font-size:13.5px;color:#000;letter-spacing:-0.613px;">100</span>
<span id="t183" class="t" style="left:883px;top:927.01px;font-size:13.5px;color:#000;letter-spacing:-0.229px;">Kekse</span>
<span id="t184" class="t" style="left:925.5px;top:947.01px;font-size:13.5px;color:#000;letter-spacing:-0.354px;">40</span>
<span id="t185" class="t" style="left:945px;top:927.01px;font-size:13.5px;color:#000;letter-spacing:-0.054px;">Kuchen</span>
<span id="t186" class="t" style="left:987.5px;top:947.01px;font-size:13.5px;color:#000;letter-spacing:-0.354px;">50</span>
<span id="t187" class="t" style="left:1007px;top:927.01px;font-size:13.5px;color:#000;letter-spacing:0.540px;">Torten</span>
<span id="t188" class="t" style="left:1050px;top:947.01px;font-size:13.5px;color:#000;letter-spacing:-0.688px;">20</span>
<div style="left:694px;top:442px;width:63px;height:21px;background:#ffff99;border:1px solid #b2b2b2;"></div>
<svg style="left:915px;top:438px;" width="45" height="52" viewBox="0 0 45 52"><g fill="#f4b183"><path d="M10.800 6.200C12.500 7.800 16 7.800 20.500 7.500C25 7.800 28.500 7.800 30.200 6.200C31.200 9 31.300 12 31 15C30.500 20 26 23.300 20.500 23.300C15 23.300 10.500 20 10.100 15C9.800 12 9.900 9 10.800 6.200Z"/><path d="M10.300 20.800C12.500 23.500 16 25.300 19.400 25.600C19.600 30 16.500 36 12 39.300C8.800 35 6.800 27.500 10.300 20.800Z"/><path d="M30.700 20.800C28.500 23.500 25 25.300 21.600 25.600C21.400 30 24.500 36 29 39.300C32.200 35 34.200 27.500 30.700 20.800Z"/><path d="M20.500 33.500C21.500 36 23.500 38.500 25.700 39.600C24.300 40.300 23 40.800 22.600 41.500L22.700 44.600H18.300L18.400 41.500C18 40.800 16.700 40.300 15.300 39.600C17.500 38.500 19.500 36 20.500 33.500Z"/><rect x="12" y="42.300" width="4.300" height="2.400"/><rect x="24.700" y="42.300" width="4.300" height="2.400"/></g><g fill="#fff"><ellipse cx="17" cy="13.200" rx="4.200" ry="4.300"/><ellipse cx="24" cy="13.200" rx="4.200" ry="4.300"/><path d="M18.600 16.300h3.800l-1.900 3.800z"/></g><circle cx="17.300" cy="13.500" r="1.700" fill="#f4b183"/><circle cx="23.800" cy="13.500" r="1.700" fill="#f4b183"/></svg>
<span id="t189" class="t" style="left:957px;top:445.94px;font-size:15.5px;color:#f4b183;font-weight:bold;letter-spacing:-0.522px;">EXPERTENTIPP</span>
<span id="t190" class="t" style="left:957px;top:466.06px;font-size:13px;color:#404040;letter-spacing:0.327px;">Die Tastenkombination</span>
<span id="t191" class="t" style="left:957px;top:484.06px;font-size:13px;color:#404040;letter-spacing:0.416px;">für &quot;Inhalte einfügen&quot;</span>
<span id="t192" class="t" style="left:957px;top:502.06px;font-size:13px;color:#404040;letter-spacing:-0.405px;">ist STRG+ALT+V.</span>
<span id="t193" class="t" style="left:785px;top:871.06px;font-size:13px;color:#404040;letter-spacing:0.049px;">Diese Daten weisen 6 Spalten...</span>
<svg style="left:692px;top:884px;" width="380" height="36" viewBox="0 0 380 36"><path d="M2.500 33.500C2.500 22 8 15.800 22 15.800H160C176 15.800 183 13 186 4.400C189 13 196 15.800 212 15.800H354C368 15.800 374 22 374 33.500" fill="none" stroke="#f4b183" stroke-width="1.900"/></svg>
<svg style="left:1069px;top:922px;" width="26" height="44" viewBox="0 0 26 44"><path d="M2.500 3.500C9 3.500 12.500 5 12.500 9V13C12.500 16 16 18 23 18C16 18 12.500 20 12.500 23V34C12.500 38 9 40 2.500 40" fill="none" stroke="#f4b183" stroke-width="1.900"/></svg>
<span id="t194" class="t" style="left:1098px;top:933.06px;font-size:13px;color:#404040;letter-spacing:0.093px;">...und 2 Zeilen auf.</span>
<div style="left:1902px;top:205px;width:15px;height:15px;background:#fff;border:1px solid #ababab;"></div>
<svg style="left:1906px;top:210px;" width="8" height="5" viewBox="0 0 8 5"><path d="M0.500 4.500h7L4 0.800z" fill="#777"/></svg>
<div style="left:1902px;top:220px;width:15px;height:302px;background:#fff;border:1px solid #ababab;"></div>
<div style="left:1902px;top:522px;width:15px;height:454px;background:#d9d9d9;"></div>
<div style="left:1902px;top:976px;width:15px;height:14px;background:#fff;border:1px solid #c6c6c6;"></div>
<svg style="left:1906px;top:981px;" width="8" height="5" viewBox="0 0 8 5"><path d="M0.500 0.500h7L4 4.200z" fill="#777"/></svg>
<div style="left:0px;top:990px;width:1920px;height:28px;background:#e6e6e6;"></div>
<div style="left:0px;top:1018px;width:1920px;height:22px;background:#f3f3f3;"></div>
<div style="left:0px;top:1018px;width:1920px;height:1px;background:#c8c8c8;"></div>
<div style="left:0px;top:990px;width:1899px;height:1px;background:#ababab;"></div>
<svg style="left:25.5px;top:998.5px;" width="8" height="11" viewBox="0 0 8 11"><path d="M5.500 1.500v8l-4-4z" fill="#c4c4c4"/></svg>
<svg style="left:54.5px;top:998.5px;" width="8" height="11" viewBox="0 0 8 11"><path d="M1.500 1.500v8l4-4z" fill="#c4c4c4"/></svg>
<div style="left:100px;top:994px;width:1px;height:20px;background:#ababab;"></div>
<div style="left:153px;top:994px;width:1px;height:20px;background:#ababab;"></div>
<div style="left:248px;top:994px;width:1px;height:20px;background:#ababab;"></div>
<div style="left:346px;top:994px;width:1px;height:20px;background:#ababab;"></div>
<div style="left:718px;top:994px;width:1px;height:20px;background:#ababab;"></div>
<div style="left:810px;top:994px;width:1px;height:20px;background:#ababab;"></div>
<div style="left:948px;top:994px;width:1px;height:20px;background:#ababab;"></div>
<div style="left:1059px;top:994px;width:1px;height:20px;background:#ababab;"></div>
<div style="left:1170px;top:994px;width:1px;height:20px;background:#ababab;"></div>
<div style="left:1288px;top:994px;width:1px;height:20px;background:#ababab;"></div>
<div style="left:1452px;top:994px;width:1px;height:20px;background:#ababab;"></div>
<div style="left:423px;top:990px;width:129px;height:25px;background:#fff;border-left:1px solid #ababab;border-right:1px solid #ababab;"></div>
<div style="left:423px;top:1013px;width:129px;height:2px;background:#217346;"></div>
<span id="t195" class="t" style="left:113px;top:997.06px;font-size:13px;color:#444;letter-spacing:-0.104px;">Start</span>
<span id="t196" class="t" style="left:167.5px;top:997.06px;font-size:13px;color:#444;letter-spacing:0.068px;">1. Addieren</span>
<span id="t197" class="t" style="left:264px;top:997.06px;font-size:13px;color:#444;letter-spacing:-0.149px;">2. Ausfüllen</span>
<span id="t198" class="t" style="left:360px;top:997.06px;font-size:13px;color:#444;letter-spacing:-0.022px;">3. Teilen</span>
<span id="t199" class="t" style="left:435px;top:997.06px;font-size:13px;color:#217346;font-weight:bold;letter-spacing:-0.022px;">4. Transponieren</span>
<span id="t200" class="t" style="left:568.7px;top:997.06px;font-size:13px;color:#444;letter-spacing:-0.040px;">5. Sortieren und Filtern</span>
<span id="t201" class="t" style="left:732px;top:997.06px;font-size:13px;color:#444;letter-spacing:0.061px;">6. Tabellen</span>
<span id="t202" class="t" style="left:826.7px;top:997.06px;font-size:13px;color:#444;letter-spacing:0.093px;">7. Dropdownlisten</span>
<span id="t203" class="t" style="left:963.3px;top:997.06px;font-size:13px;color:#444;letter-spacing:-0.176px;">8. Analysieren</span>
<span id="t204" class="t" style="left:1073px;top:997.06px;font-size:13px;color:#444;letter-spacing:0.014px;">9. Diagramme</span>
<span id="t205" class="t" style="left:1185px;top:997.06px;font-size:13px;color:#444;letter-spacing:-0.108px;">10. PivotTables</span>
<span id="t206" class="t" style="left:1305px;top:997.06px;font-size:13px;color:#444;letter-spacing:0.094px;">Weitere Informationen</span>
<svg style="left:1485px;top:995px;" width="18" height="18" viewBox="0 0 18 18"><circle cx="9" cy="9" r="7.500" fill="none" stroke="#777" stroke-width="1.200"/><path d="M9 5v8M5 9h8" stroke="#777" stroke-width="1.400"/></svg>
<div style="left:1615px;top:998px;width:2px;height:2px;background:#b5b5b5;border-radius:1px;"></div>
<div style="left:1615px;top:1003px;width:2px;height:2px;background:#b5b5b5;border-radius:1px;"></div>
<div style="left:1615px;top:1008px;width:2px;height:2px;background:#b5b5b5;border-radius:1px;"></div>
<div style="left:1632px;top:997px;width:15px;height:15px;background:#fff;border:1px solid #ababab;"></div>
<svg style="left:1636px;top:1000px;" width="6" height="9" viewBox="0 0 6 9"><path d="M5 0.800v7.400L1 4.500z" fill="#777"/></svg>
<div style="left:1647px;top:997px;width:225px;height:15px;background:#fff;border:1px solid #ababab;"></div>
<div style="left:1872px;top:997px;width:11px;height:15px;background:#d9d9d9;"></div>
<div style="left:1886px;top:997px;width:15px;height:15px;background:#fff;border:1px solid #ababab;"></div>
<svg style="left:1891px;top:1000px;" width="6" height="9" viewBox="0 0 6 9"><path d="M1 0.800v7.400l4-3.700z" fill="#777"/></svg>
<span id="t207" class="t" style="left:7px;top:1024.00px;font-size:11px;color:#444;letter-spacing:0.045px;">Bereit</span>
<div style="left:1631px;top:1018px;width:38px;height:22px;background:#c6c6c6;"></div>
<svg style="left:1642px;top:1021px;" width="15" height="15" viewBox="0 0 15 15"><rect x="1.500" y="1.500" width="12" height="12" fill="none" stroke="#666"/><path d="M5.500 1.500v12M9.500 1.500v12M1.500 5.500h12M1.500 9.500h12" stroke="#666"/></svg>
<svg style="left:1680px;top:1021px;" width="16" height="15" viewBox="0 0 16 15"><rect x="1.500" y="1.500" width="13" height="12" fill="none" stroke="#666"/><rect x="4.500" y="4.500" width="7" height="7" fill="none" stroke="#666"/><path d="M6 6.500h4M6 8.500h4M6 10.500h4" stroke="#666" stroke-width="0.900"/></svg>
<svg style="left:1718px;top:1021px;" width="16" height="15" viewBox="0 0 16 15"><rect x="1.500" y="1.500" width="13" height="12" fill="none" stroke="#666"/><path d="M5.500 1.500v6M10.500 1.500v6M1.500 7.500h9" fill="none" stroke="#666"/></svg>
<div style="left:1750px;top:1028px;width:6px;height:2px;background:#555;"></div>
<div style="left:1760px;top:1029px;width:100px;height:1px;background:#a0a0a0;"></div>
<div style="left:1808px;top:1023px;width:5px;height:11px;background:#707070;"></div>
<div style="left:1863px;top:1028px;width:8px;height:2px;background:#555;"></div>
<div style="left:1866px;top:1025px;width:2px;height:8px;background:#555;"></div>
<span id="t208" class="t" style="left:1882.5px;top:1024.00px;font-size:11px;color:#444;letter-spacing:-0.445px;">100 %</span>
</body></html>
